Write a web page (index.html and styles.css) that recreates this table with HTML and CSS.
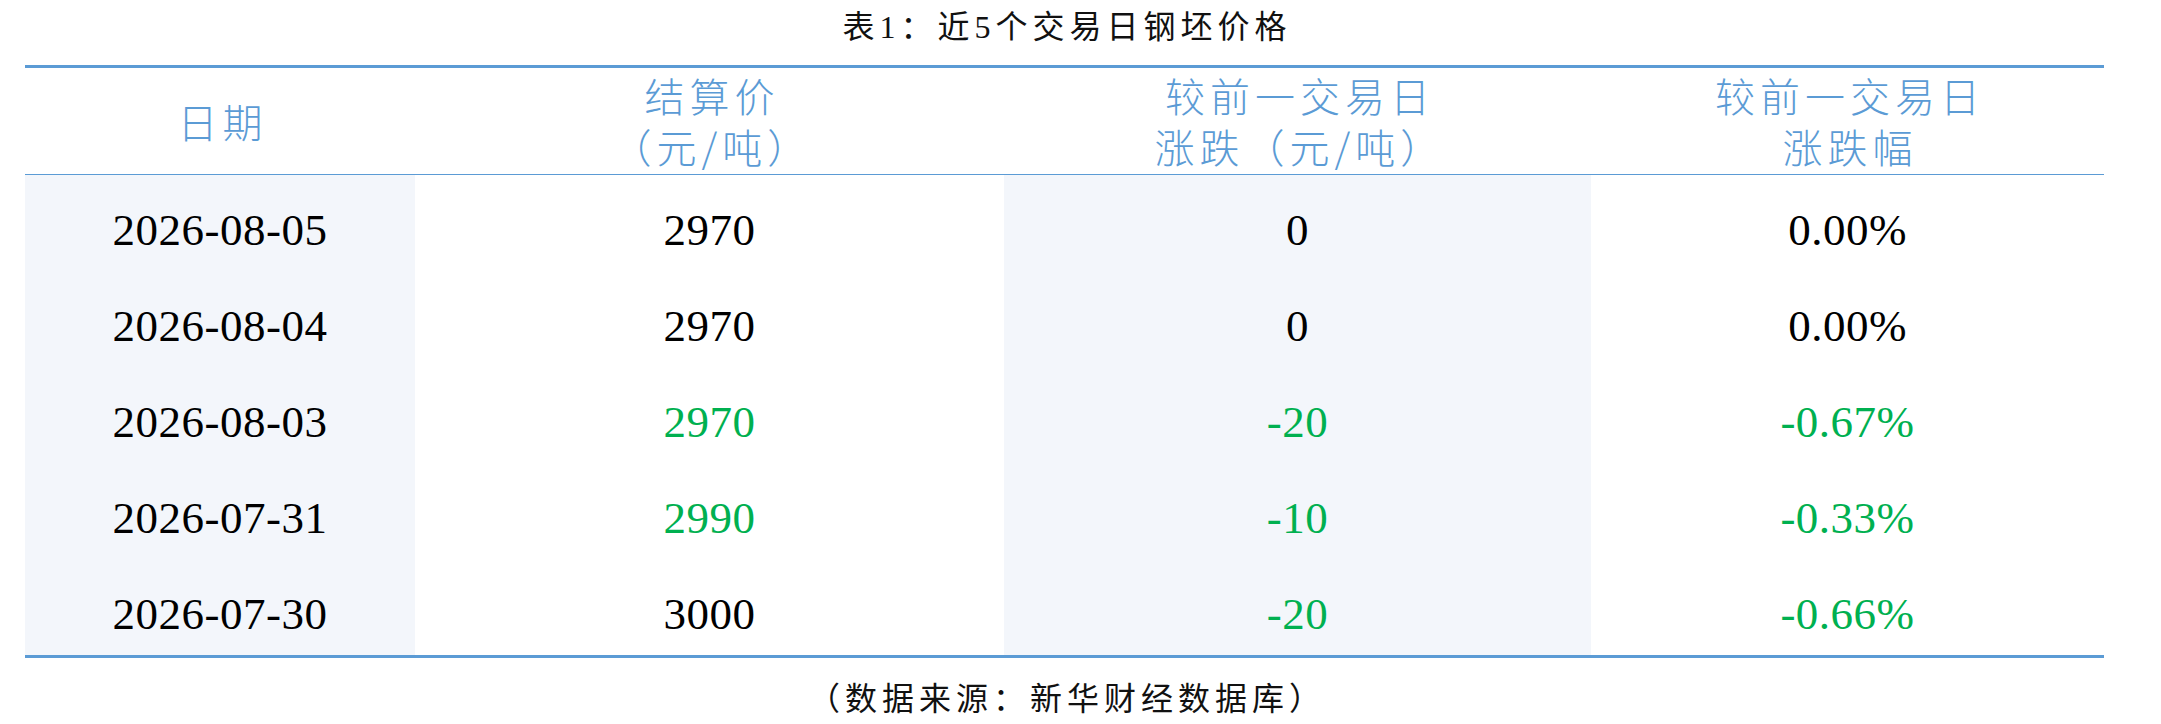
FILE: index.html
```html
<!DOCTYPE html>
<html lang="zh-CN">
<head>
<meta charset="utf-8">
<title>表1：近5个交易日钢坯价格</title>
<link rel="stylesheet" href="styles.css">
</head>
<body>
<div class="page">
  <div class="caption">表1：近5个交易日钢坯价格</div>
  <div class="table">
    <div class="th">日期</div>
    <div class="th">结算价<br>（元/吨）</div>
    <div class="th">较前一交易日<br>涨跌（元/吨）</div>
    <div class="th">较前一交易日<br>涨跌幅</div>

    <div class="td shade">2026-08-05</div>
    <div class="td">2970</div>
    <div class="td shade">0</div>
    <div class="td">0.00%</div>

    <div class="td shade">2026-08-04</div>
    <div class="td">2970</div>
    <div class="td shade">0</div>
    <div class="td">0.00%</div>

    <div class="td shade">2026-08-03</div>
    <div class="td down">2970</div>
    <div class="td shade down">-20</div>
    <div class="td down">-0.67%</div>

    <div class="td shade">2026-07-31</div>
    <div class="td down">2990</div>
    <div class="td shade down">-10</div>
    <div class="td down">-0.33%</div>

    <div class="td shade">2026-07-30</div>
    <div class="td">3000</div>
    <div class="td shade down">-20</div>
    <div class="td down">-0.66%</div>
  </div>
  <div class="source">（数据来源：新华财经数据库）</div>
</div>
</body>
</html>
```

FILE: styles.css
```css
html, body {
  margin: 0;
  padding: 0;
  background: #ffffff;
}

.page {
  padding-left: 25px;
  width: 2079px;
}

.caption {
  height: 65px;
  line-height: 54px;
  text-align: center;
  font-family: "Liberation Serif", "Noto Sans CJK SC", serif;
  font-size: 32px;
  letter-spacing: 5px;
  padding-left: 5px;
  color: #111111;
}

.table {
  display: grid;
  grid-template-columns: 390px 589px 587px 513px;
  width: 2079px;
  border-top: 3px solid #5b9bd5;
  border-bottom: 3px solid #5b9bd5;
}

.th {
  height: 107px;
  border-bottom: 1px solid #5b9bd5;
  display: flex;
  align-items: center;
  justify-content: center;
  text-align: center;
  font-family: "Noto Sans CJK SC", sans-serif;
  font-weight: 300;
  font-size: 40px;
  line-height: 51px;
  letter-spacing: 5px;
  padding-left: 5px;
  color: #5b9bd5;
  box-sizing: border-box;
}

.td {
  height: 96px;
  box-sizing: border-box;
  padding-top: 14px;
  display: flex;
  align-items: center;
  justify-content: center;
  font-family: "Liberation Serif", serif;
  font-size: 45px;
  letter-spacing: 0.5px;
  color: #000000;
}

.shade {
  background: #f3f6fb;
}

.down {
  color: #00b050;
}

.source {
  margin-top: 14px;
  line-height: 54px;
  text-align: center;
  font-family: "Liberation Serif", "Noto Sans CJK SC", serif;
  font-size: 32px;
  letter-spacing: 5px;
  padding-left: 5px;
  color: #111111;
}
```
